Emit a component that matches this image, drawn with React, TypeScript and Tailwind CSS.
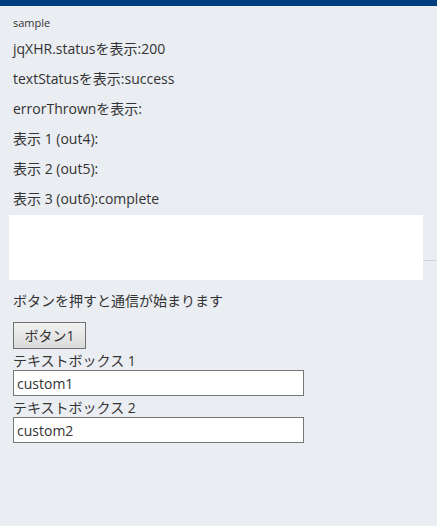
import React from "react";

const font = { fontFamily: '"Open Sans", "Noto Sans CJK JP", sans-serif' };

export default function App() {
  return (
    <div className="min-h-[526px] w-full bg-[#eaedf2] text-[#333333]" style={font}>
      <div className="h-[6px] bg-[#003f7f]" />
      <div className="mt-[9px] pl-[13px] text-[11px] leading-[16px]">sample</div>
      <div className="mt-[3px] pl-[13px] text-[14px]">
        <div className="h-[30px] leading-[30px]">jqXHR.statusを表示:200</div>
        <div className="h-[30px] leading-[30px]">textStatusを表示:success</div>
        <div className="h-[30px] leading-[30px]">errorThrownを表示:</div>
        <div className="h-[30px] leading-[30px]">表示 1 (out4):</div>
        <div className="h-[30px] leading-[30px]">表示 2 (out5):</div>
        <div className="h-[30px] leading-[30px]">表示 3 (out6):complete</div>
      </div>
      <div className="mt-[1px] flex items-start">
        <div className="ml-[9px] h-[65px] w-[414px] bg-white" />
        <div className="h-[46px] flex-1 border-b border-[#cfd3d9]" />
      </div>
      <div className="mt-[11px] pl-[13px] text-[14px] leading-[20px]">ボタンを押すと通信が始まります</div>
      <div className="mt-[11px] pl-[13px]">
        <button className="h-[27px] w-[73px] border border-[#707070] bg-gradient-to-b from-[#f2f2f2] to-[#dadada] text-[14px] leading-[20px] text-[#333333]">
          ボタン1
        </button>
      </div>
      <div className="pl-[13px] text-[14px]">
        <div className="h-[21px] pt-[1px] leading-[21px]">テキストボックス 1</div>
        <input
          readOnly
          value="custom1"
          className="h-[26px] w-[291px] border border-[#767676] bg-white px-[3px] text-[14px] text-[#333333] outline-none"
          style={font}
        />
        <div className="h-[21px] pt-[1px] leading-[21px]">テキストボックス 2</div>
        <input
          readOnly
          value="custom2"
          className="h-[26px] w-[291px] border border-[#767676] bg-white px-[3px] text-[14px] text-[#333333] outline-none"
          style={font}
        />
      </div>
    </div>
  );
}
